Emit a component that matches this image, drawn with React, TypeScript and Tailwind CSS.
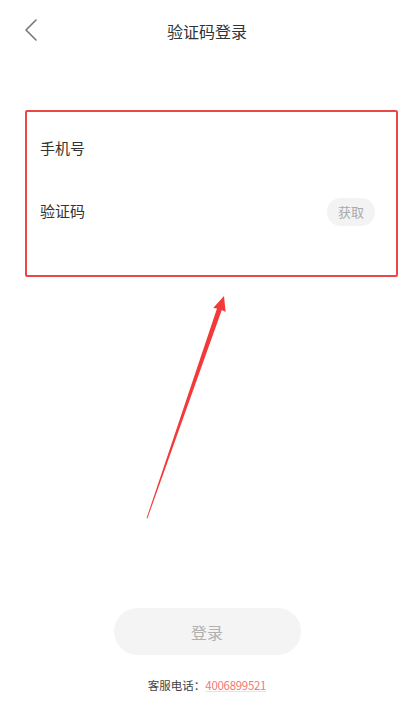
import React from 'react';

const font = { fontFamily: '"Noto Sans CJK SC", "Noto Sans", sans-serif' };

const BackIcon = () => (
    <svg width="14" height="24" viewBox="0 0 14 24" fill="none">
        <path d="M12 2 L2 12 L12 22" stroke="#777" strokeWidth="1.6" strokeLinecap="round" strokeLinejoin="round" />
    </svg>
);

// red annotation arrow drawn over the page
const Arrow = () => (
    <svg className="absolute left-0 top-0 pointer-events-none" width="414" height="720" viewBox="0 0 414 720">
        <polygon
            points="224,296 225.6,312 221.8,310 147.4,518.4 146.6,518 217,308.4 213.2,308"
            fill="#f23a3a"
        />
    </svg>
);

export default function App() {
    return (
        <div className="relative w-[414px] h-[720px] bg-white flex flex-col text-[#333]" style={font}>
            {/* Header */}
            <div className="relative h-[62px] flex items-center justify-center">
                <div className="absolute left-[24px] top-[18px]">
                    <BackIcon />
                </div>
                <span className="text-[16px] text-[#333]">验证码登录</span>
            </div>

            {/* Form */}
            <div className="ml-[25px] mr-[16px] mt-[48px] h-[167px] border-2 border-[#e94848] rounded-[2px] flex flex-col pt-[5px]">
                <div className="h-[63px] flex items-center px-[13px] text-[15px]">手机号</div>
                <div className="h-[63px] flex items-center justify-between pl-[13px] pr-[21px] text-[15px]">
                    <span>验证码</span>
                    <span className="w-[48px] h-[28px] rounded-full bg-[#f3f3f3] text-[#aaa] text-[13px] flex items-center justify-center">
                        获取
                    </span>
                </div>
            </div>

            <div className="flex-1" />

            {/* Login button */}
            <div className="flex justify-center">
                <div className="w-[187px] h-[47px] rounded-full bg-[#f4f4f4] text-[#b0b0b0] text-[16px] flex items-center justify-center">
                    登录
                </div>
            </div>

            {/* Footer */}
            <div className="h-[65px] flex items-center justify-center text-[11.5px] pb-[4px]">
                <span className="text-[#444]">客服电话：</span>
                <span className="text-[#f07a7a] underline decoration-[#fbdada] tracking-[-0.3px]">4006899521</span>
            </div>

            <Arrow />
        </div>
    );
}
